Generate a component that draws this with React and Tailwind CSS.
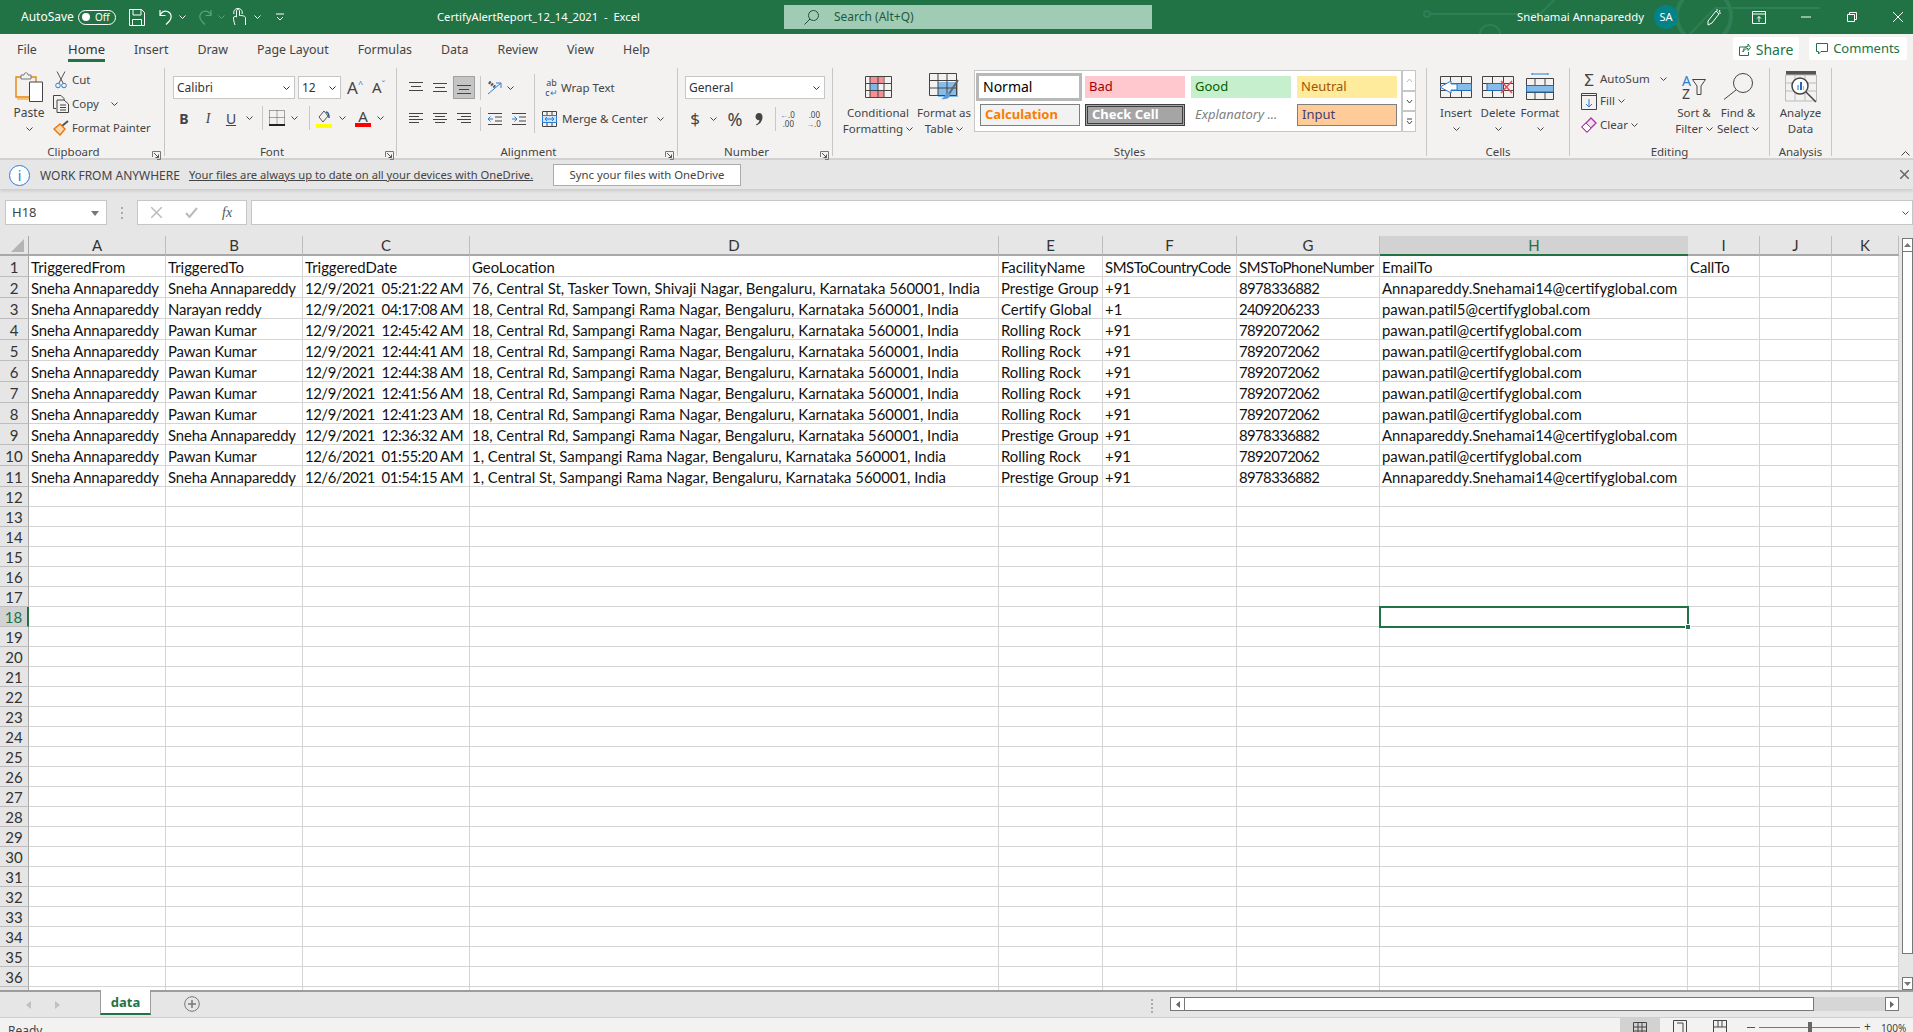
import React from "react";

const ui = "font-['Noto_Sans',sans-serif]";
const cellFont = "font-['Lato',sans-serif]";

const columns = [
  { name: "A", w: "w-[137px]", track: "tracking-[-0.14px]" },
  { name: "B", w: "w-[137px]", track: "tracking-[-0.14px]" },
  { name: "C", w: "w-[167px]", track: "tracking-[-0.45px]" },
  { name: "D", w: "w-[529px]" },
  { name: "E", w: "w-[104px]" },
  { name: "F", w: "w-[134px]", head: "tracking-[-0.45px]" },
  { name: "G", w: "w-[143px]", track: "tracking-[-0.6px]", head: "tracking-[-0.33px]" },
  { name: "H", w: "w-[308px]" },
  { name: "I", w: "w-[72px]" },
  { name: "J", w: "w-[72px]" },
  { name: "K", w: "w-[67px]" },
];

const tasker = "76, Central St, Tasker Town, Shivaji Nagar, Bengaluru, Karnataka 560001, India";
const central = "18, Central Rd, Sampangi Rama Nagar, Bengaluru, Karnataka 560001, India";
const sampangi = "1, Central St, Sampangi Rama Nagar, Bengaluru, Karnataka 560001, India";
const sneha = "Annapareddy.Snehamai14@certifyglobal.com";
const pawan = "pawan.patil@certifyglobal.com";
const from = "Sneha Annapareddy";

const rows = [
  ["TriggeredFrom", "TriggeredTo", "TriggeredDate", "GeoLocation", "FacilityName", "SMSToCountryCode", "SMSToPhoneNumber", "EmailTo", "CallTo"],
  [from, "Sneha Annapareddy", "12/9/2021  05:21:22 AM", tasker, "Prestige Group", "+91", "8978336882", sneha],
  [from, "Narayan reddy", "12/9/2021  04:17:08 AM", central, "Certify Global", "+1", "2409206233", "pawan.patil5@certifyglobal.com"],
  [from, "Pawan Kumar", "12/9/2021  12:45:42 AM", central, "Rolling Rock", "+91", "7892072062", pawan],
  [from, "Pawan Kumar", "12/9/2021  12:44:41 AM", central, "Rolling Rock", "+91", "7892072062", pawan],
  [from, "Pawan Kumar", "12/9/2021  12:44:38 AM", central, "Rolling Rock", "+91", "7892072062", pawan],
  [from, "Pawan Kumar", "12/9/2021  12:41:56 AM", central, "Rolling Rock", "+91", "7892072062", pawan],
  [from, "Pawan Kumar", "12/9/2021  12:41:23 AM", central, "Rolling Rock", "+91", "7892072062", pawan],
  [from, "Sneha Annapareddy", "12/9/2021  12:36:32 AM", central, "Prestige Group", "+91", "8978336882", sneha],
  [from, "Pawan Kumar", "12/6/2021  01:55:20 AM", sampangi, "Rolling Rock", "+91", "7892072062", pawan],
  [from, "Sneha Annapareddy", "12/6/2021  01:54:15 AM", sampangi, "Prestige Group", "+91", "8978336882", sneha],
];

const tabs = ["Home", "Insert", "Draw", "Page Layout", "Formulas", "Data", "Review", "View", "Help"];

function Chev({ className = "", color = "#444" }) {
  return (
    <svg width="7" height="4" viewBox="0 0 7 4" className={`shrink-0 ${className}`}>
      <path d="M.5.5 3.5 3.5 6.5.5" fill="none" stroke={color} strokeWidth="1" />
    </svg>
  );
}

function Launcher({ className = "" }) {
  return (
    <svg width="9" height="9" viewBox="0 0 9 9" className={className}>
      <path d="M.5 6V.5H8.5V8.5H5" fill="none" stroke="#777" />
      <path d="M2 2 6.5 6.5M6.5 3.5V6.5H3.5" fill="none" stroke="#555" />
    </svg>
  );
}

function Sep({ className = "" }) {
  return <div className={`w-px h-[24px] bg-[#c8c8c8] shrink-0 ${className}`} />;
}

function GroupSep() {
  return <div className="w-px h-[88px] bg-[#c6c6c6] shrink-0" />;
}

function GroupLabel({ children, className = "" }) {
  return <div className={`h-[14px] mt-[1px] leading-[14px] text-center text-[11.5px] text-[#444] whitespace-nowrap ${className}`}>{children}</div>;
}

function AlignIcon({ lines, className = "" }) {
  return (
    <svg width="14" height="14" viewBox="0 0 14 14" className={`shrink-0 ${className}`}>
      {lines.map((l, i) => (
        <path key={i} d={`M${l[0]} ${l[2]}H${l[1]}`} stroke="#444" strokeWidth="1" />
      ))}
    </svg>
  );
}

function BigBtn({ icon, lines, className = "" }) {
  return (
    <div className={`flex flex-col items-center shrink-0 text-[11.5px] leading-[16px] text-[#444] ${className}`}>
      <div className="h-[37px] flex items-center justify-center">{icon}</div>
      {lines.map((l, i) => (
        <div key={i} className="h-[16px] flex items-center gap-[3px] whitespace-nowrap">
          {l}
        </div>
      ))}
    </div>
  );
}

function Grid32({ children }) {
  return (
    <svg width="32" height="24" viewBox="0 0 32 24">
      {children}
    </svg>
  );
}

function TitleBar() {
  return (
    <div className="relative h-[34px] bg-[#217346] text-white flex items-center text-[12px] overflow-hidden shrink-0">
      <svg className="absolute left-[1420px] top-0" width="400" height="34" viewBox="0 0 400 34" fill="none" stroke="#2e7f55" strokeWidth="2">
        <circle cx="7" cy="14" r="3" />
        <path d="M10 14H120M120 14 136 -2M60 34C60 22 80 22 80 34M270 34 295 8H400" />
        <circle cx="284" cy="16" r="27" strokeWidth="4" />
      </svg>
      <span className="relative ml-[21px] w-[50px] whitespace-nowrap">AutoSave</span>
      <div className="relative ml-[7px] w-[38px] h-[15px] rounded-full border border-white flex items-center shrink-0">
        <span className="ml-[3px] w-[8px] h-[8px] rounded-full bg-white" />
        <span className="ml-[5px] text-[10px] leading-none">Off</span>
      </div>
      <svg className="ml-[13px] shrink-0" width="16" height="17" viewBox="0 0 16 17" fill="none" stroke="#fff">
        <path d="M.5.5H12.5L15.5 3.5V16.5H.5ZM4 .5V6H12V.5M3.5 16.5V10.5H12.5V16.5" />
      </svg>
      <svg className="ml-[14px] shrink-0" width="14" height="16" viewBox="0 0 14 16" fill="none" stroke="#fff" strokeWidth="1.2">
        <path d="M1 1V6.5H6.5M1 6C3 2.5 6 1.5 8.5 2.5 12.5 4 13.5 9 10 12.5L7 15.5" />
      </svg>
      <Chev className="ml-[6px]" color="#fff" />
      <svg className="ml-[12px] shrink-0" width="14" height="16" viewBox="0 0 14 16" fill="none" stroke="#5fa07f" strokeWidth="1.2">
        <path d="M13 1V6.5H7.5M13 6C11 2.5 8 1.5 5.5 2.5 1.5 4 .5 9 4 12.5L7 15.5" />
      </svg>
      <Chev className="ml-[6px]" color="#5fa07f" />
      <svg className="ml-[8px] shrink-0" width="13" height="18" viewBox="0 0 13 18" fill="none" stroke="#fff">
        <path d="M2 17C1 14 .5 12 .5 10S3 8 3.5 9V3C3.5 1 6.5 1 6.5 3V7.5C10 7.5 12.5 8 12.5 10V17" />
        <path d="M1 6C0 3 2 .5 5 .5S10 3 9 6" />
      </svg>
      <Chev className="ml-[8px]" color="#fff" />
      <svg className="ml-[15px] shrink-0" width="8" height="8" viewBox="0 0 8 8" fill="none" stroke="#fff">
        <path d="M0 1H8M1 4 4 7 7 4" />
      </svg>
      <span className="relative ml-[153px] w-[201px] text-[11.2px] whitespace-pre">CertifyAlertReport_12_14_2021  -  Excel</span>
      <div className="relative ml-[146px] w-[368px] h-[24px] bg-[#a0ccb5] flex items-center shrink-0 text-[#1f5a3c]">
        <svg className="ml-[20px]" width="15" height="15" viewBox="0 0 15 15" fill="none" stroke="#1f4f37">
          <circle cx="9.5" cy="5.5" r="5" />
          <path d="M6 9 .5 14.5" />
        </svg>
        <span className="ml-[15px]">Search (Alt+Q)</span>
      </div>
      <span className="relative ml-[365px] w-[126px] text-[11.3px] whitespace-nowrap">Snehamai Annapareddy</span>
      <div className="relative ml-[11px] w-[24px] h-[24px] rounded-full bg-[#038387] flex items-center justify-center text-[11px] shrink-0">SA</div>
      <svg className="relative ml-[28px] shrink-0" width="16" height="18" viewBox="0 0 16 18" fill="none" stroke="#fff">
        <path d="M2 13 10 3 13 6 6 15 2 17ZM11 1V3M14 2 13 4M15 5H13" />
      </svg>
      <svg className="relative ml-[30px] shrink-0" width="14" height="13" viewBox="0 0 14 13" fill="none" stroke="#fff">
        <path d="M.5.5H13.5V12.5H.5ZM.5 3H13.5M7 11V5.5M5 7.5 7 5.5 9 7.5" />
      </svg>
      <svg className="relative ml-[35px] shrink-0" width="10" height="10" viewBox="0 0 10 10" fill="none" stroke="#fff">
        <path d="M0 5H10" />
      </svg>
      <svg className="relative ml-[36px] shrink-0" width="10" height="10" viewBox="0 0 10 10" fill="none" stroke="#fff">
        <path d="M.5 2.5H7.5V9.5H.5ZM2.5 2.5V.5H9.5V7.5H7.5" />
      </svg>
      <svg className="relative ml-[36px] shrink-0" width="10" height="10" viewBox="0 0 10 10" fill="none" stroke="#fff">
        <path d="M0 0 10 10M10 0 0 10" />
      </svg>
    </div>
  );
}

function TabsRow() {
  return (
    <div className="h-[34px] bg-[#f3f2f1] flex text-[12.4px] text-[#444] shrink-0">
      <div className="ml-[17px] h-[28px] pt-[4px] leading-[23px] w-[18px]">File</div>
      <div className="ml-[33px] flex gap-[29px]">
        {tabs.map((t) => (
          <div
            key={t}
            className={`h-[28px] pt-[4px] leading-[23px] whitespace-nowrap ${
              t === "Home" ? "border-b-[3px] border-[#217346] text-[#333] text-[13px]" : ""
            }`}
          >
            {t}
          </div>
        ))}
      </div>
      <div className="ml-auto mr-[6px] mt-[3px] flex gap-[10px] text-[13px] text-[#217346]">
        <div className="w-[66px] h-[23px] pt-[1px] bg-white rounded-[2px] flex items-center justify-center gap-[5px] text-[14px]">
          <svg width="12" height="13" viewBox="0 0 12 13" fill="none" stroke="#217346">
            <path d="M8 4H.5V12.5H9.5V9M4 9C4 5 7 3.5 9 3.5V1L11.5 4.5 9 7.5V5.5C7 5.5 5 6.5 4 9Z" />
          </svg>
          Share
        </div>
        <div className="w-[98px] h-[23px] pt-[1px] bg-white rounded-[2px] flex items-center justify-center gap-[5px]">
          <svg width="12" height="12" viewBox="0 0 12 12" fill="none" stroke="#217346">
            <path d="M.5.5H11.5V8.5H5L2.5 11V8.5H.5Z" />
          </svg>
          Comments
        </div>
      </div>
    </div>
  );
}

function Clipboard() {
  return (
    <div className="w-[164px] shrink-0 relative">
      <div className="flex h-[76px]">
        <BigBtn
          className="ml-[13px] w-[32px] text-[12px]"
          icon={
            <svg width="28" height="30" viewBox="0 0 28 30" fill="none">
              <path d="M1 5H21V25H1Z" stroke="#e8860c" strokeWidth="1.4" fill="#f3f2f1" />
              <path d="M2 27H18" stroke="#f7c26b" strokeWidth="2" />
              <path d="M6 5V3H9C9 0 13 0 13 3H16V7H6Z" stroke="#777" fill="#f3f2f1" />
              <path d="M14.5 10H27.5V29.5H14.5Z" stroke="#444" fill="#fff" />
            </svg>
          }
          lines={["Paste", <Chev key="c" />]}
        />
        <div className="ml-[8px] text-[11.5px] text-[#444]">
          <div className="h-[24px] flex items-center gap-[3px] whitespace-nowrap">
            <svg width="16" height="18" viewBox="0 0 16 18" fill="none">
              <path d="M4 .5 10 12M12 .5 6 12" stroke="#555" />
              <circle cx="5" cy="14.5" r="2.3" stroke="#2b7cd3" />
              <circle cx="11" cy="14.5" r="2.3" stroke="#2b7cd3" />
            </svg>
            Cut
          </div>
          <div className="h-[24px] flex items-center gap-[3px] whitespace-nowrap">
            <svg width="16" height="18" viewBox="0 0 16 18" fill="none" stroke="#444">
              <path d="M3 13.5H.5V.5H8L11 3.5V5" />
              <path d="M4 5H11L15.5 9V17.5H4ZM7 10H13M7 12.5H13M7 15H13" />
            </svg>
            Copy
            <Chev className="ml-[9px]" />
          </div>
          <div className="h-[24px] flex items-center gap-[3px] whitespace-nowrap text-[11.2px]">
            <svg width="16" height="16" viewBox="0 0 16 16" fill="none">
              <path d="M15 1 9 6" stroke="#555" strokeWidth="2" />
              <path d="M7 4 12 9 7 15 1 9Z" stroke="#e8760c" strokeWidth="1.4" fill="#fbd9ae" />
            </svg>
            Format Painter
          </div>
        </div>
      </div>
      <GroupLabel className="pr-[17px]">Clipboard</GroupLabel>
      <Launcher className="absolute right-[3px] bottom-[-2px]" />
    </div>
  );
}

function Combo({ value, className = "" }) {
  return (
    <div className={`h-[23px] bg-white border border-[#c6c6c6] flex items-center justify-between pl-[3px] pr-[4px] text-[12px] text-[#333] shrink-0 ${className}`}>
      {value}
      <Chev color="#333" />
    </div>
  );
}

function FontGroup() {
  return (
    <div className="w-[231px] shrink-0 relative">
      <div className="h-[76px] pt-[8px]">
        <div className="flex items-center h-[23px]">
          <Combo value="Calibri" className="ml-[8px] w-[122px]" />
          <Combo value="12" className="ml-[3px] w-[43px]" />
          <span className="ml-[6px] w-[15px] text-[17px] leading-none text-[#444] flex">
            A<span className="text-[9px] text-[#2b7cd3]">^</span>
          </span>
          <span className="ml-[10px] w-[15px] text-[15px] leading-none text-[#444] flex">
            A<span className="text-[9px] text-[#2b7cd3]">ˇ</span>
          </span>
        </div>
        <div className="flex items-center h-[28px] mt-[5px] text-[14px] text-[#444]">
          <span className="ml-[13px] w-[12px] text-center font-bold">B</span>
          <span className="ml-[12px] w-[12px] text-center italic font-['Liberation_Serif',serif]">I</span>
          <span className="ml-[11px] w-[12px] text-center underline">U</span>
          <Chev className="ml-[9px]" />
          <Sep className="ml-[9px]" />
          <svg className="ml-[6px] shrink-0" width="16" height="17" viewBox="0 0 16 17" fill="none">
            <path d="M.5.5H15.5V14M.5.5V14M8 .5V14M.5 7.5H15.5" stroke="#555" strokeDasharray="1 1" />
            <path d="M0 15H16" stroke="#222" strokeWidth="2" />
          </svg>
          <Chev className="ml-[6px]" />
          <Sep className="ml-[11px]" />
          <svg className="ml-[6px] shrink-0" width="16" height="19" viewBox="0 0 16 19" fill="none">
            <path d="M3 8 8 2 12 7 7 13Z" stroke="#555" />
            <path d="M10 3C12 3 13 6 13 9" stroke="#2b5a8a" strokeWidth="1.5" />
            <path d="M0 17H16" stroke="#ffff00" strokeWidth="4" />
          </svg>
          <Chev className="ml-[7px]" />
          <div className="ml-[9px] w-[16px] flex flex-col items-center text-[15px] leading-[14px] shrink-0">
            A<div className="w-[16px] h-[4px] bg-[#ff0000]" />
          </div>
          <Chev className="ml-[6px]" />
        </div>
      </div>
      <GroupLabel className="pr-[17px]">Font</GroupLabel>
      <Launcher className="absolute right-[2px] bottom-[-2px]" />
    </div>
  );
}

function Alignment() {
  return (
    <div className="w-[280px] shrink-0 relative">
      <div className="h-[76px] flex pt-[6px]">
        <div className="w-[137px] shrink-0 pt-[2px]">
          <div className="flex items-center h-[23px]">
            <AlignIcon className="ml-[12px]" lines={[[0, 14, 1.5], [2, 12, 5.5], [0, 14, 9.5]]} />
            <AlignIcon className="ml-[10px]" lines={[[0, 14, 2.5], [2, 12, 6.5], [0, 14, 10.5]]} />
            <div className="ml-[6px] w-[22px] h-[23px] bg-[#c5c5c5] border border-[#a0a0a0] flex items-center justify-center shrink-0">
              <AlignIcon lines={[[0, 14, 4.5], [2, 12, 8.5], [0, 14, 12.5]]} />
            </div>
            <Sep className="ml-[5px]" />
            <svg className="ml-[6px] shrink-0" width="16" height="15" viewBox="0 0 16 15" fill="none">
              <path d="M2 2 8 7" stroke="#555" strokeWidth="3" strokeDasharray="2 1" />
              <path d="M1 14 14 3M14 3H9M14 3V8" stroke="#2b7cd3" />
            </svg>
            <Chev className="ml-[4px]" />
          </div>
          <div className="flex items-center h-[28px] mt-[6px]">
            <AlignIcon className="ml-[12px]" lines={[[0, 14, 1.5], [0, 10, 4.5], [0, 14, 7.5], [0, 10, 10.5]]} />
            <AlignIcon className="ml-[10px]" lines={[[0, 14, 1.5], [2, 12, 4.5], [0, 14, 7.5], [2, 12, 10.5]]} />
            <AlignIcon className="ml-[10px]" lines={[[0, 14, 1.5], [4, 14, 4.5], [0, 14, 7.5], [4, 14, 10.5]]} />
            <Sep className="ml-[9px]" />
            <svg className="ml-[7px] shrink-0" width="14" height="14" viewBox="0 0 14 14" fill="none">
              <path d="M0 1.5H14M7 5H14M7 9H14M0 12.5H14" stroke="#444" />
              <path d="M5 7H0M2.5 4.5 0 7 2.5 9.5" stroke="#2b7cd3" />
            </svg>
            <svg className="ml-[10px] shrink-0" width="14" height="14" viewBox="0 0 14 14" fill="none">
              <path d="M0 1.5H14M7 5H14M7 9H14M0 12.5H14" stroke="#444" />
              <path d="M0 7H5M2.5 4.5 5 7 2.5 9.5" stroke="#2b7cd3" />
            </svg>
          </div>
        </div>
        <div className="w-px h-[59px] bg-[#c8c8c8] shrink-0" />
        <div className="pt-[2px] text-[11.5px] text-[#444]">
          <div className="flex items-center h-[23px] ml-[9px] whitespace-nowrap">
            <span className="w-[15px] text-[9px] leading-[10px] text-center">
              ab
              <br />c<span className="text-[#2b7cd3]">↵</span>
            </span>
            <span className="ml-[2px]">Wrap Text</span>
          </div>
          <div className="flex items-center h-[28px] mt-[6px] ml-[7px] whitespace-nowrap">
            <svg className="shrink-0" width="15" height="16" viewBox="0 0 15 16" fill="none">
              <path d="M.5.5H14.5V15.5H.5ZM.5 4.5H14.5M.5 11.5H14.5M5 .5V4.5M10 .5V4.5M5 11.5V15.5M10 11.5V15.5" stroke="#444" />
              <path d="M.5 4.5H14.5V11.5H.5Z" fill="#cfe4f7" stroke="#2b7cd3" />
              <path d="M3 8H12M5 6 3 8 5 10M10 6 12 8 10 10" stroke="#2b7cd3" />
            </svg>
            <span className="ml-[5px]">Merge & Center</span>
            <Chev className="ml-[9px]" />
          </div>
        </div>
      </div>
      <GroupLabel className="pr-[17px]">Alignment</GroupLabel>
      <Launcher className="absolute right-[3px] bottom-[-2px]" />
    </div>
  );
}

function NumberGroup() {
  return (
    <div className="w-[154px] shrink-0 relative">
      <div className="h-[76px] pt-[8px]">
        <Combo value="General" className="ml-[7px] w-[140px]" />
        <div className="flex items-center h-[28px] mt-[6px] text-[#444]">
          <span className="ml-[11px] w-[12px] text-[17px] text-center">$</span>
          <Chev className="ml-[9px]" />
          <span className="ml-[9px] w-[18px] text-[18px] text-center">%</span>
          <svg className="ml-[11px] shrink-0" width="8" height="14" viewBox="0 0 8 14">
            <path d="M4 1C6.5 1 7.5 3 7.5 5 7.5 9 5 12 1.5 13.5L1 12.5C3 11.5 4.2 10 4.5 8.2 2.5 8.5.5 7 .5 4.8.5 2.6 2 1 4 1Z" fill="#444" />
          </svg>
          <Sep className="ml-[12px]" />
          <div className="ml-[4px] w-[14px] text-[8px] leading-[9px] text-right">
            <span className="text-[#2b7cd3]">←</span>.0
            <br />
            .00
          </div>
          <div className="ml-[12px] w-[14px] text-[8px] leading-[9px] text-right">
            .00
            <br />
            <span className="text-[#2b7cd3]">→</span>.0
          </div>
        </div>
      </div>
      <GroupLabel className="pr-[17px]">Number</GroupLabel>
      <Launcher className="absolute right-[3px] bottom-[-2px]" />
    </div>
  );
}

function StyleChip({ className, children }) {
  return <div className={`h-[22px] flex items-center pl-[4px] text-[13px] whitespace-nowrap shrink-0 ${className}`}>{children}</div>;
}

function Styles() {
  return (
    <div className="w-[593px] shrink-0">
      <div className="h-[76px] flex">
        <BigBtn
          className="ml-[13px] w-[64px]"
          icon={
            <svg width="27" height="22" viewBox="0 0 27 22" fill="none">
              <path d="M5 1H18V8H5ZM5 15H19V21H5Z" fill="#f58f96" />
              <path d="M5 8H13V15H5Z" fill="#7db6e8" />
              <path d="M.5.5H26.5V21.5H.5ZM.5 7.5H26.5M.5 14.5H26.5M5 .5V21.5M13 .5V21.5M19 .5V21.5" stroke="#444" />
            </svg>
          }
          lines={["Conditional", <React.Fragment key="f">Formatting <Chev /></React.Fragment>]}
        />
        <BigBtn
          className="ml-[5px] w-[58px]"
          icon={
            <svg width="30" height="28" viewBox="0 0 30 28" fill="none">
              <path d="M9 9H29V24H9Z" fill="#85bce9" />
              <path d="M.5.5H27.5V22.5H.5ZM.5 7.5H27.5M.5 15H27.5M9 .5V22.5M18 .5V22.5" stroke="#444" />
              <path d="M29 7 20 21" stroke="#666" strokeWidth="2" />
              <path d="M20 20C23 24 18 27 12 26 16 25 15 20 20 20Z" fill="#5a9bd5" />
            </svg>
          }
          lines={["Format as", <React.Fragment key="t">Table <Chev /></React.Fragment>]}
        />
        <div className="ml-[1px] mt-[2px] w-[442px] h-[62px] flex shrink-0">
          <div className="w-[428px] h-[62px] bg-white border border-[#c6c6c6] shrink-0">
            <div className="flex items-center mt-[2px] h-[28px]">
              <div className="ml-[1px] w-[106px] h-[28px] pb-[2px] border-[3px] border-[#b8b8b8] flex items-center pl-[4px] text-[14px] text-black shrink-0">Normal</div>
              <StyleChip className="ml-[3px] w-[100px] bg-[#ffc7ce] text-[#9c0006]">Bad</StyleChip>
              <StyleChip className="ml-[6px] w-[100px] bg-[#c6efce] text-[#006100]">Good</StyleChip>
              <StyleChip className="ml-[6px] w-[100px] bg-[#ffeb9c] text-[#9c5700]">Neutral</StyleChip>
            </div>
            <div className="flex items-center mt-[3px]">
              <StyleChip className="ml-[5px] w-[100px] bg-[#f2f2f2] border border-[#7f7f7f] text-[#fa7d00] font-bold text-[12.5px]">Calculation</StyleChip>
              <StyleChip className="ml-[5px] w-[100px] bg-[#a5a5a5] border-[3px] border-double border-[#3f3f3f] text-white font-bold text-[12.5px]">Check Cell</StyleChip>
              <StyleChip className="ml-[6px] w-[100px] text-[#7f7f7f] italic">Explanatory ...</StyleChip>
              <StyleChip className="ml-[6px] w-[100px] bg-[#ffcc99] border border-[#7f7f7f] text-[#3f3f76]">Input</StyleChip>
            </div>
          </div>
          <div className="w-[14px] h-[62px] flex flex-col shrink-0">
            {["M1 5 3.5 2 6 5", "M1 2 3.5 5 6 2", "M1 1H6M1 3 3.5 6 6 3"].map((d, i) => (
              <div key={i} className="h-[21px] border border-[#c6c6c6] bg-white flex items-center justify-center">
                <svg width="7" height="7" viewBox="0 0 7 7" fill="none">
                  <path d={d} stroke={i === 0 ? "#bbb" : "#444"} />
                </svg>
              </div>
            ))}
          </div>
        </div>
      </div>
      <GroupLabel>Styles</GroupLabel>
    </div>
  );
}

function Cells() {
  const grid = "M.5 1.5H31.5V22.5H.5ZM.5 8.5H31.5M.5 15.5H31.5M10.5 1.5V22.5M21.5 1.5V22.5";
  return (
    <div className="w-[142px] shrink-0">
      <div className="h-[76px] flex pl-[8px]">
        <BigBtn
          className="w-[42px]"
          icon={
            <Grid32>
              <path d={grid} stroke="#444" fill="none" />
              <path d="M11 8.5H31.5V15.5H11Z" fill="#85bce9" stroke="#1f6bb5" />
              <path d="M12 6V9H18V15H12V18L1 12Z" fill="#fff" stroke="#2b7cd3" transform="translate(-1 0)" />
            </Grid32>
          }
          lines={["Insert", <Chev key="c" />]}
        />
        <BigBtn
          className="w-[42px]"
          icon={
            <Grid32>
              <path d={grid} stroke="#444" fill="none" />
              <path d="M5 8.5H20V15.5H5Z" fill="#85bce9" stroke="#1f6bb5" />
              <path d="M19 6 30 18M30 6 19 18" stroke="#f0484f" strokeWidth="1.5" />
            </Grid32>
          }
          lines={["Delete", <Chev key="c" />]}
        />
        <BigBtn
          className="w-[42px]"
          icon={
            <svg width="28" height="28" viewBox="0 0 28 28" fill="none">
              <path d="M6 1H22M6 0V2M22 0V2" stroke="#2b7cd3" />
              <path d="M.5 5.5H27.5V26.5H.5ZM.5 19.5H27.5M9 5.5V26.5M19 5.5V26.5" stroke="#444" />
              <path d="M.5 12.5H27.5V19H.5Z" fill="#85bce9" stroke="#1f6bb5" />
            </svg>
          }
          lines={["Format", <Chev key="c" />]}
        />
      </div>
      <GroupLabel>Cells</GroupLabel>
    </div>
  );
}

function Editing() {
  return (
    <div className="w-[199px] shrink-0">
      <div className="h-[76px] flex">
        <div className="ml-[11px] w-[91px] text-[11.5px] text-[#444] shrink-0">
          <div className="h-[22px] flex items-center whitespace-nowrap">
            <span className="w-[16px] text-[17px] text-center leading-none">Σ</span>
            <span className="ml-[3px]">AutoSum</span>
            <Chev className="ml-[10px]" />
          </div>
          <div className="h-[22px] flex items-center gap-[3px] whitespace-nowrap">
            <svg width="16" height="17" viewBox="0 0 16 17" fill="none">
              <path d="M.5.5H15.5V16.5H.5Z" stroke="#444" />
              <path d="M.5 2.5H15.5" stroke="#444" />
              <path d="M8 6V14M5 11 8 14 11 11" stroke="#2b7cd3" />
            </svg>
            Fill <Chev />
          </div>
          <div className="mt-[2px] h-[22px] flex items-center gap-[3px] whitespace-nowrap">
            <svg width="16" height="16" viewBox="0 0 16 16" fill="none">
              <path d="M10 1 15 6 6 15 1 10Z" stroke="#a33ea1" strokeWidth="1.4" fill="#f4dcf3" />
              <path d="M1 10 5 6 10 11 6 15Z" fill="#fff" stroke="#a33ea1" />
            </svg>
            Clear <Chev />
          </div>
        </div>
        <BigBtn
          className="w-[44px]"
          icon={
            <div className="flex items-center gap-[1px]">
              <div className="flex flex-col text-[14px] leading-[13px]">
                <span className="text-[#2b7cd3]">A</span>
                <span>Z</span>
              </div>
              <svg width="14" height="16" viewBox="0 0 14 16" fill="none" stroke="#444">
                <path d="M.5.5H13.5L9 7V15.5H5V7Z" />
              </svg>
            </div>
          }
          lines={["Sort &", <React.Fragment key="f">Filter <Chev /></React.Fragment>]}
        />
        <BigBtn
          className="w-[44px]"
          icon={
            <svg width="30" height="27" viewBox="0 0 30 27" fill="none" stroke="#444">
              <circle cx="20" cy="10" r="9.5" />
              <path d="M13 17 1 26.5" />
            </svg>
          }
          lines={["Find &", <React.Fragment key="f">Select <Chev /></React.Fragment>]}
        />
      </div>
      <GroupLabel>Editing</GroupLabel>
    </div>
  );
}

function Analysis() {
  return (
    <div className="w-[61px] shrink-0">
      <div className="h-[76px]">
        <BigBtn
          icon={
            <svg width="32" height="32" viewBox="0 0 32 32" fill="none">
              <path d="M1 0H31V4H1Z" fill="#555" />
              <path d="M.5 4H31.5V30H.5ZM.5 12H31.5M.5 20H31.5M10 4V30M20 4V30" stroke="#bbb" fill="#f3f2f1" />
              <circle cx="15" cy="15" r="8" fill="#fff" stroke="#444" strokeWidth="1.5" />
              <path d="M21 21 31 31" stroke="#444" strokeWidth="1.5" />
              <path d="M12 14V19H14V14Z" fill="#85bce9" />
              <path d="M15 11V19H17V11Z" fill="#1f6bb5" />
              <path d="M18 15V19H19V15Z" fill="#85bce9" />
            </svg>
          }
          lines={["Analyze", "Data"]}
        />
      </div>
      <GroupLabel>Analysis</GroupLabel>
    </div>
  );
}

function Ribbon() {
  return (
    <div className="h-[92px] bg-[#f3f2f1] border-b-2 border-[#d2d2d2] flex shrink-0">
      <Clipboard />
      <GroupSep />
      <FontGroup />
      <GroupSep />
      <Alignment />
      <GroupSep />
      <NumberGroup />
      <GroupSep />
      <Styles />
      <GroupSep />
      <Cells />
      <GroupSep />
      <Editing />
      <GroupSep />
      <Analysis />
      <GroupSep />
      <svg className="ml-auto mr-[3px] mt-[83px]" width="9" height="5" viewBox="0 0 9 5" fill="none" stroke="#444">
        <path d="M.5 4.5 4.5.5 8.5 4.5" />
      </svg>
    </div>
  );
}

function InfoBar() {
  return (
    <div className="h-[29px] bg-[#e6e6e6] flex items-center text-[12px] text-[#444] shrink-0 shadow-[0_2px_3px_rgba(0,0,0,0.12)] relative">
      <div className="ml-[9px] mt-[2px] w-[21px] h-[21px] rounded-full border border-[#2b7cd3] bg-white text-[#2b7cd3] flex items-center justify-center text-[14px] shrink-0">i</div>
      <span className="ml-[10px] mt-[2px] whitespace-nowrap">WORK FROM ANYWHERE</span>
      <span className="ml-[9px] mt-[2px] text-[11.2px] underline whitespace-nowrap">Your files are always up to date on all your devices with OneDrive.</span>
      <div className="absolute left-[553px] top-[4px] w-[188px] h-[22px] pt-[1px] bg-white border border-[#ababab] flex items-center justify-center text-[11.3px] whitespace-nowrap">
        Sync your files with OneDrive
      </div>
      <svg className="ml-auto mr-[4px]" width="9" height="9" viewBox="0 0 9 9" fill="none" stroke="#666" strokeWidth="1.5">
        <path d="M0 0 9 9M9 0 0 9" />
      </svg>
    </div>
  );
}

function FormulaBar() {
  return (
    <div className="h-[47px] bg-[#e6e6e6] pt-[11px] shrink-0">
      <div className="flex h-[25px] text-[13px] text-[#444]">
        <div className="ml-[5px] w-[102px] pt-[1px] bg-white border border-[#c6c6c6] flex items-center justify-between pl-[6px] pr-[7px]">
          H18
          <svg width="8" height="5" viewBox="0 0 8 5">
            <path d="M0 0H8L4 5Z" fill="#777" />
          </svg>
        </div>
        <div className="ml-[14px] w-[2px] flex flex-col items-center justify-center gap-[3px]">
          <span className="w-[2px] h-[2px] bg-[#aaa]" />
          <span className="w-[2px] h-[2px] bg-[#aaa]" />
          <span className="w-[2px] h-[2px] bg-[#aaa]" />
        </div>
        <div className="ml-[14px] w-[110px] bg-white border border-[#c6c6c6] flex items-center">
          <svg className="ml-[13px]" width="11" height="11" viewBox="0 0 11 11" fill="none" stroke="#bbb" strokeWidth="1.5">
            <path d="M0 0 11 11M11 0 0 11" />
          </svg>
          <svg className="ml-[23px]" width="13" height="11" viewBox="0 0 13 11" fill="none" stroke="#bbb" strokeWidth="2">
            <path d="M1 6 4.5 10 12 1" />
          </svg>
          <span className="ml-[24px] italic font-['Liberation_Serif',serif] text-[14px] text-[#555]">fx</span>
        </div>
        <div className="ml-[4px] flex-1 bg-white border border-[#c6c6c6] flex items-center justify-end pr-[3px]">
          <Chev color="#555" />
        </div>
      </div>
    </div>
  );
}

function Sheet() {
  const rowNums = Array.from({ length: 37 }, (_, i) => i + 1);
  return (
    <div className={`h-[754px] overflow-hidden flex bg-[#e6e6e6] shrink-0 ${cellFont}`}>
      <div className="w-[1899px] shrink-0 bg-white">
        <div className="flex h-[20px] bg-[#e6e6e6] text-[15px] text-[#333]">
          <div className="w-[29px] h-[20px] border-b-2 border-r border-[#a8a8a8] flex items-end justify-end pr-[4px] pb-[2px] shrink-0">
            <svg width="13" height="13" viewBox="0 0 13 13">
              <path d="M13 0V13H0Z" fill="#b4b4b4" />
            </svg>
          </div>
          {columns.map((c) => (
            <div
              key={c.name}
              className={`${c.w} h-[20px] pt-[1px] shrink-0 flex items-center justify-center ${
                c.name === "H"
                  ? "bg-[#d2d2d2] text-[#217346] border-b-2 border-[#217346]"
                  : "border-r border-b-2 border-r-[#bdbdbd] border-b-[#a8a8a8]"
              }`}
            >
              {c.name}
            </div>
          ))}
        </div>
        {rowNums.map((n) => (
          <div key={n} className={`flex ${n <= 11 ? "h-[21px]" : "h-[20px]"} text-[14.9px] text-[#111]`}>
            <div
              className={`w-[29px] shrink-0 flex items-center justify-center text-[15px] ${n <= 11 ? "pt-[3px]" : "pt-[1px]"} ${
                n === 18
                  ? "bg-[#d2d2d2] text-[#217346] border-r-2 border-[#217346] border-b border-b-[#bdbdbd]"
                  : "bg-[#e6e6e6] text-[#333] border-r border-b border-r-[#a8a8a8] border-b-[#bdbdbd]"
              }`}
            >
              {n}
            </div>
            {columns.map((c, i) => {
              const selected = n === 18 && c.name === "H";
              return (
                <div
                  key={c.name}
                  className={`${c.w} ${n === 1 ? c.head || "" : c.track || ""} shrink-0 relative border-r border-b border-[#d4d4d4] pl-[2px] pt-[3px] flex items-center overflow-hidden whitespace-pre ${
                    selected ? "overflow-visible outline-2 -outline-offset-1 outline-[#217346] z-10" : ""
                  }`}
                >
                  {rows[n - 1]?.[i]}
                  {selected && <span className="absolute right-[-4px] bottom-[-4px] w-[6px] h-[6px] bg-[#217346] border border-white" />}
                </div>
              );
            })}
          </div>
        ))}
      </div>
      <div className="ml-[3px] w-[11px] flex flex-col pt-[2px]">
        <div className="h-[14px] bg-white border border-[#777] flex items-center justify-center shrink-0">
          <svg width="7" height="4" viewBox="0 0 7 4"><path d="M3.5 0 7 4H0Z" fill="#777" /></svg>
        </div>
        <div className="h-[702px] bg-white border-x border-b border-[#777] shrink-0" />
        <div className="flex-1" />
        <div className="h-[13px] bg-white border border-[#777] flex items-center justify-center shrink-0">
          <svg width="7" height="4" viewBox="0 0 7 4"><path d="M3.5 4 7 0H0Z" fill="#777" /></svg>
        </div>
      </div>
    </div>
  );
}

function SheetTabs() {
  return (
    <div className={`h-[28px] bg-[#e6e6e6] border-t-2 border-[#9d9d9d] border-b border-b-[#cfcfcf] flex shrink-0 ${ui}`}>
      <svg className="ml-[26px] mt-[9px]" width="5" height="8" viewBox="0 0 5 8"><path d="M5 0V8L0 4Z" fill="#c0c0c0" /></svg>
      <svg className="ml-[24px] mt-[9px]" width="5" height="8" viewBox="0 0 5 8"><path d="M0 0V8L5 4Z" fill="#c0c0c0" /></svg>
      <div className="ml-[40px] w-[51px] h-[25px] -mt-[2px] pt-[3px] bg-white border-x border-[#9d9d9d] border-b-2 border-b-[#217346] flex items-center justify-center text-[13px] font-bold text-[#217346]">
        data
      </div>
      <svg className="ml-[33px] mt-[4px]" width="16" height="16" viewBox="0 0 16 16" fill="none" stroke="#777">
        <circle cx="8" cy="8" r="7.3" />
        <path d="M8 4V12M4 8H12" strokeWidth="1.5" />
      </svg>
      <div className="ml-[951px] mt-[7px] flex flex-col gap-[2px]">
        <span className="w-[2px] h-[2px] bg-[#aaa]" />
        <span className="w-[2px] h-[2px] bg-[#aaa]" />
        <span className="w-[2px] h-[2px] bg-[#aaa]" />
        <span className="w-[2px] h-[2px] bg-[#aaa]" />
      </div>
      <div className="ml-[17px] mt-[5px] h-[14px] flex">
        <div className="w-[15px] bg-white border border-[#777] flex items-center justify-center">
          <svg width="4" height="7" viewBox="0 0 4 7"><path d="M4 0V7L0 3.5Z" fill="#666" /></svg>
        </div>
        <div className="w-[629px] bg-white border-y border-r border-[#777]" />
        <div className="w-[71px] bg-[#d6d6d6]" />
        <div className="w-[14px] bg-white border border-[#777] flex items-center justify-center">
          <svg width="4" height="7" viewBox="0 0 4 7"><path d="M0 0V7L4 3.5Z" fill="#666" /></svg>
        </div>
      </div>
    </div>
  );
}

function StatusBar() {
  return (
    <div className={`h-[24px] bg-[#f3f2f1] flex items-center text-[12px] text-[#444] shrink-0 ${ui}`}>
      <span className="ml-[8px] mt-[2px] w-[34px] shrink-0">Ready</span>
      <div className="ml-[1578px] w-[40px] h-[24px] bg-[#d2d2d2] flex justify-center pt-[4px] shrink-0">
        <svg width="14" height="14" viewBox="0 0 14 14" fill="none" stroke="#444">
          <path d="M.5.5H13.5V13.5H.5ZM.5 5H13.5M.5 9H13.5M5 .5V13.5M9 .5V13.5" />
        </svg>
      </div>
      <svg className="ml-[13px] mb-[6px] shrink-0" width="14" height="14" viewBox="0 0 14 14" fill="none" stroke="#444">
        <path d="M.5.5H13.5V13.5H.5ZM4 3H10V13" />
      </svg>
      <svg className="ml-[26px] mb-[6px] shrink-0" width="14" height="14" viewBox="0 0 14 14" fill="none" stroke="#444">
        <path d="M.5.5H13.5V7H.5ZM.5 .5V13M13.5 .5V13M5 .5V7M9 .5V7" />
      </svg>
      <div className="ml-[20px] mb-[6px] w-[8px] h-px bg-[#555] shrink-0" />
      <div className="ml-[4px] mb-[6px] w-[101px] h-px bg-[#777] relative shrink-0">
        <span className="absolute left-[49px] top-[-5px] w-[4px] h-[11px] bg-[#666]" />
      </div>
      <span className="ml-[4px] mb-[6px] leading-none">+</span>
      <span className="ml-[10px] mb-[4px] text-[10px] whitespace-nowrap">100%</span>
    </div>
  );
}

export default function App() {
  return (
    <div className={`w-[1913px] h-[1032px] overflow-hidden flex flex-col ${ui}`}>
      <TitleBar />
      <TabsRow />
      <Ribbon />
      <InfoBar />
      <FormulaBar />
      <Sheet />
      <SheetTabs />
      <StatusBar />
    </div>
  );
}
